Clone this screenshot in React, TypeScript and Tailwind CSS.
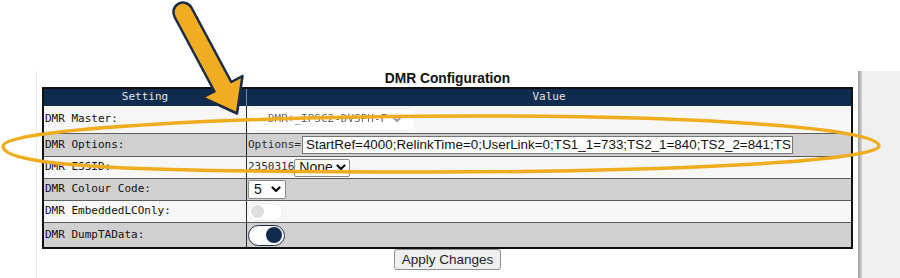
import React from 'react';

const mono = "font-['DejaVu_Sans_Mono',monospace]";
const sans = "font-['Liberation_Sans',Arial,sans-serif]";

function Chevron() {
  return (
    <svg width="10" height="7" viewBox="0 0 10 7" className="shrink-0">
      <polyline points="1.5,1.5 5,5 8.5,1.5" fill="none" stroke="#111" strokeWidth="2.2" strokeLinecap="round" strokeLinejoin="round" />
    </svg>
  );
}

function Row({ label, shade, h, last, children }: { label: string; shade: boolean; h: string; last?: boolean; children?: React.ReactNode }) {
  return (
    <div className={`flex ${h} ${shade ? 'bg-[#d1d0d0]' : 'bg-[#f7f7f7]'} ${last ? '' : 'border-b border-[#5c5c5c]'}`}>
      <div className={`w-[203px] shrink-0 flex items-center pl-[1px] border-r border-[#2a2a2a] text-[11px] text-[#111] ${mono}`}>
        {label}
      </div>
      <div className="flex-1 flex items-center pl-[1px]">{children}</div>
    </div>
  );
}

export default function App() {
  return (
    <div className={`relative w-[900px] h-[278px] overflow-hidden bg-white ${sans}`}>
      <div className="h-[71px]" />
      <div className="flex h-[207px]">
        <div className="w-[36px]" />
        <div className="w-px bg-[#ebebeb]" />
        <main className="flex-1 flex flex-col px-[5px]">
          <div className="h-[16px] leading-[16px] text-center text-[13.75px] font-bold text-[#111]">DMR Configuration</div>
          <div className="border-2 border-[#111]">
            {/* header */}
            <div className={`flex h-[17px] bg-[#0f2b4d] text-[11px] text-[#e4e4e4] ${mono}`}>
              <div className="w-[203px] shrink-0 flex items-center justify-center border-r border-[#7c8ba1]">Setting</div>
              <div className="flex-1 flex items-center justify-center">Value</div>
            </div>

            <Row label="DMR Master:" shade={false} h="h-[28px]">
              <div className="ml-[1px] w-[166px] h-[23px] rounded-[5px] bg-white border border-[#f0f0f0] flex items-center justify-between pl-[18px] pr-[12px]">
                <span className={`text-[11px] text-[#6a6a6a] blur-[0.5px] ${mono}`}>DMR+_IPSC2-DVSPH-F</span>
                <span className="opacity-40 blur-[0.4px]"><Chevron /></span>
              </div>
            </Row>

            <Row label="DMR Options:" shade h="h-[23px]">
              <span className={`text-[11px] text-[#2e2e2e] ${mono}`}>Options=</span>
              <div className="ml-[1px] w-[491px] h-[18px] bg-white border border-[#767676] overflow-hidden flex items-center pl-[3px]">
                <span className="text-[13.4px] text-[#111] whitespace-nowrap">StartRef=4000;RelinkTime=0;UserLink=0;TS1_1=733;TS2_1=840;TS2_2=841;TS</span>
              </div>
            </Row>

            <Row label="DMR ESSID:" shade={false} h="h-[22px]">
              <span className={`text-[11px] text-[#2e2e2e] ${mono}`}>2350316</span>
              <div className="w-[56px] h-[18px] bg-white border border-[#8a8a8a] rounded-[2px] flex items-center justify-between pl-[4px] pr-[3px]">
                <span className="text-[14px] text-[#111]">None</span>
                <Chevron />
              </div>
            </Row>

            <Row label="DMR Colour Code:" shade h="h-[22px]">
              <div className="w-[38px] h-[19px] bg-white border border-[#8a8a8a] rounded-[2px] flex items-center justify-between pl-[5px] pr-[4px]">
                <span className="text-[14px] text-[#111]">5</span>
                <Chevron />
              </div>
            </Row>

            <Row label="DMR EmbeddedLCOnly:" shade={false} h="h-[22px]">
              <div className="w-[35px] h-[18px] rounded-full bg-white border border-[#ececec] flex items-center pl-[2px]">
                <div className="w-[13px] h-[13px] rounded-full bg-[#dedede]" />
              </div>
            </Row>

            <Row label="DMR DumpTAData:" shade h="h-[24px]" last>
              <div className="w-[37px] h-[21px] rounded-full bg-white border-[1.5px] border-[#1d2b40] flex items-center justify-end pr-[2px]">
                <div className="w-[16px] h-[16px] rounded-full bg-[#0f2b4d]" />
              </div>
            </Row>
          </div>
          <div className="flex justify-center">
            <button className="h-[21px] px-[7px] bg-[#efefef] border border-[#8f8f8f] rounded-[3px] text-[13.5px] text-[#222] leading-none">
              Apply Changes
            </button>
          </div>
        </main>
        <div className="w-[4px] bg-gradient-to-r from-[#9a9a9a] to-[#d4d4d4]" />
        <div className="w-[38px] bg-[#f0efef]" />
      </div>

      {/* annotation overlay */}
      <svg className="absolute inset-0 pointer-events-none" width="900" height="278" viewBox="0 0 900 278">
        <path
          d="M 3 146 C 3 128, 250 116, 480 116 C 700 116, 879 128, 879 146 C 879 162, 650 172, 430 172 C 150 172, 3 168, 3 146 Z"
          fill="none"
          stroke="#efac1c"
          strokeWidth="3.5"
        />
        <path
          d="M 174.6 17 L 214.5 91.5 L 202.5 97.5 L 237 113.5 L 242.5 76 L 231.3 82 L 191.4 7.5 A 9.5 9.5 0 0 0 174.6 17 Z"
          fill="#f0ad22"
          stroke="#1b2b45"
          strokeWidth="2.5"
          strokeLinejoin="round"
        />
      </svg>
    </div>
  );
}
